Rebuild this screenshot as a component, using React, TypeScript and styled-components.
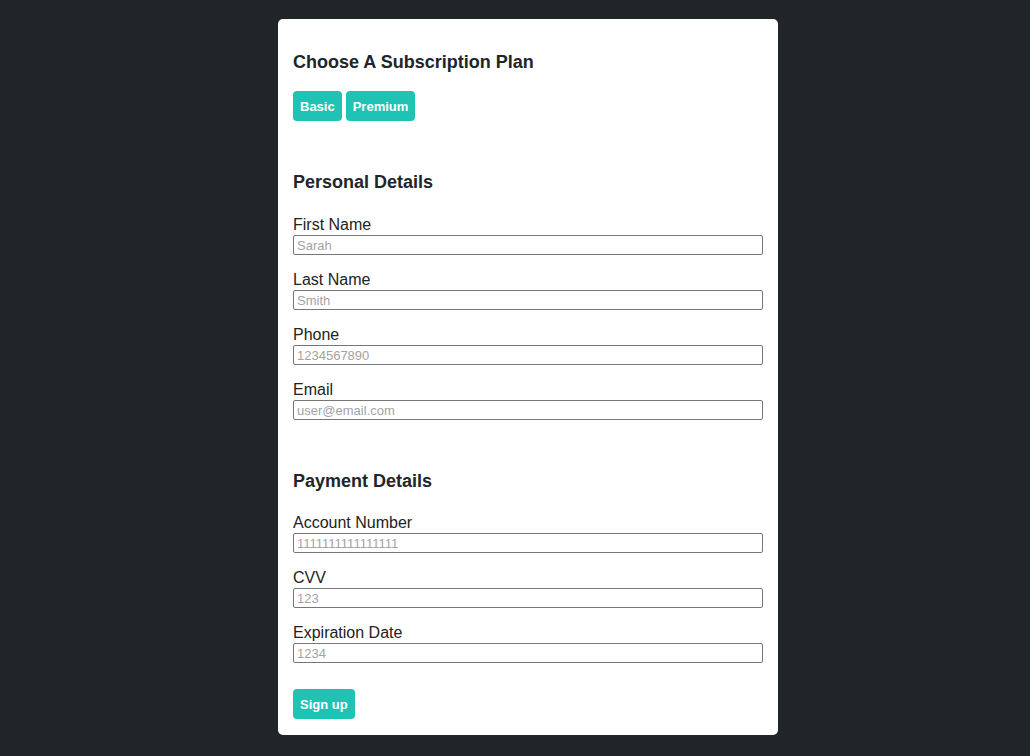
import styled, { createGlobalStyle } from 'styled-components'

const GlobalStyle = createGlobalStyle`
  html, body {
    margin: 0;
    padding: 0;
    background-color: #212529;
    font-family: "Liberation Sans", Arial, sans-serif;
  }
`

// -- Layout --
const Page = styled.main`
  min-height: 756px;
  display: flex;
  justify-content: center;
  align-items: flex-start;
  padding: 19px 0 0 26px;
  box-sizing: border-box;
`

const Card = styled.form`
  width: 500px;
  box-sizing: border-box;
  background-color: #ffffff;
  border-radius: 5px;
  padding: 32px 15px 16px;
  display: flex;
  flex-direction: column;
`

const Section = styled.section<{ $gap: number }>`
  display: flex;
  flex-direction: column;
  margin-bottom: ${(p) => p.$gap}px;
`

const Heading = styled.h3<{ $space: number }>`
  margin: 0 0 ${(p) => p.$space}px;
  font-size: 18px;
  line-height: 22px;
  font-weight: 700;
  color: #212529;
`

const PlanRow = styled.div`
  display: flex;
  gap: 4px;
`

const TealButton = styled.button`
  height: 30px;
  padding: 0 7px;
  background-color: #20c3b3;
  color: #ffffff;
  border: none;
  border-radius: 4px;
  font-family: "Liberation Sans", Arial, sans-serif;
  font-size: 13px;
  font-weight: 700;
  cursor: pointer;
  align-self: flex-start;
`

const Fields = styled.div`
  display: flex;
  flex-direction: column;
  gap: 16px;
`

const Field = styled.label`
  display: flex;
  flex-direction: column;
  gap: 1px;
`

const FieldLabel = styled.span`
  font-size: 16px;
  line-height: 18px;
  color: #222222;
`

const FieldInput = styled.input`
  width: 470px;
  height: 20px;
  box-sizing: border-box;
  margin: 0;
  padding: 0 3px;
  border: 1px solid #767676;
  border-radius: 2px;
  font-family: "Liberation Sans", Arial, sans-serif;
  font-size: 13px;
  color: #222222;
  outline: none;

  &::placeholder {
    color: #a3a3a3;
  }
`

const personal = [
  { label: 'First Name', placeholder: 'Sarah' },
  { label: 'Last Name', placeholder: 'Smith' },
  { label: 'Phone', placeholder: '1234567890' },
  { label: 'Email', placeholder: 'user@email.com' },
]

const payment = [
  { label: 'Account Number', placeholder: '1111111111111111' },
  { label: 'CVV', placeholder: '123' },
  { label: 'Expiration Date', placeholder: '1234' },
]

const App = () => {
  return (
    <>
      <GlobalStyle />
      <Page>
        <Card onSubmit={(e) => e.preventDefault()}>
          <Section $gap={50}>
            <Heading $space={18}>Choose A Subscription Plan</Heading>
            <PlanRow>
              <TealButton type="button">Basic</TealButton>
              <TealButton type="button">Premium</TealButton>
            </PlanRow>
          </Section>

          <Section $gap={50}>
            <Heading $space={23}>Personal Details</Heading>
            <Fields>
              {personal.map((f) => (
                <Field key={f.label}>
                  <FieldLabel>{f.label}</FieldLabel>
                  <FieldInput type="text" placeholder={f.placeholder} />
                </Field>
              ))}
            </Fields>
          </Section>

          <Section $gap={26}>
            <Heading $space={22}>Payment Details</Heading>
            <Fields>
              {payment.map((f) => (
                <Field key={f.label}>
                  <FieldLabel>{f.label}</FieldLabel>
                  <FieldInput type="text" placeholder={f.placeholder} />
                </Field>
              ))}
            </Fields>
          </Section>

          <TealButton type="submit">Sign up</TealButton>
        </Card>
      </Page>
    </>
  )
}

export default App
